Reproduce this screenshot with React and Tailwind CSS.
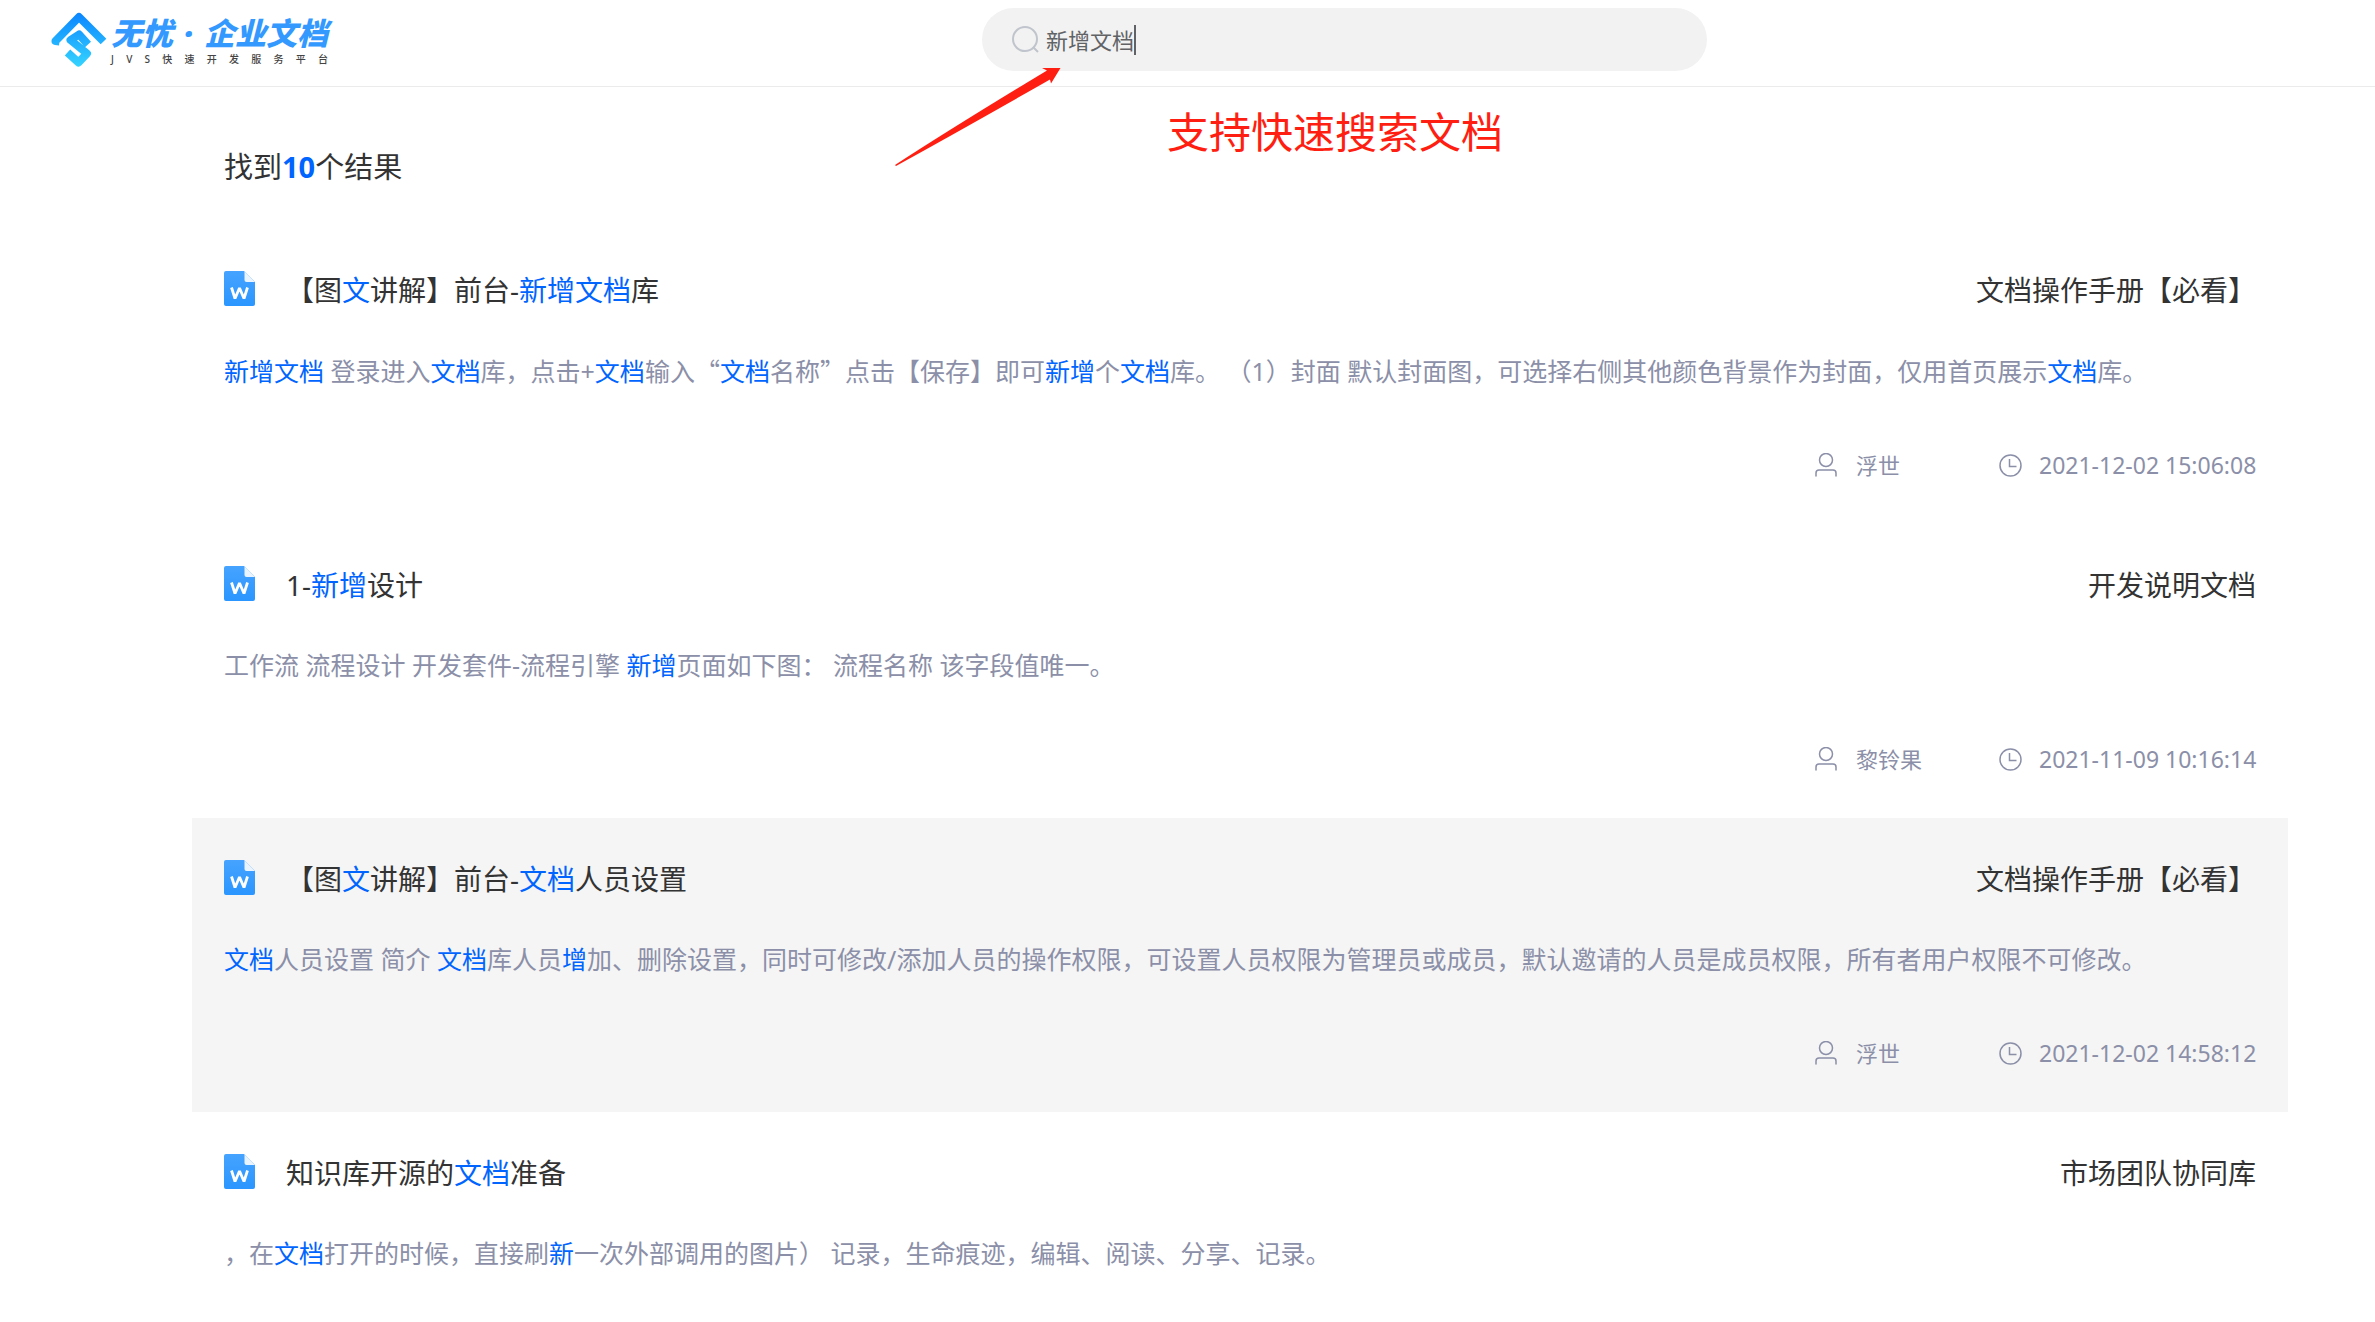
import React, { useState } from 'react';

const results = [
  {
    title: '【图<文>讲解】前台-<新增文档>库',
    library: '文档操作手册【必看】',
    summary:
      '<新增文档> 登录进入<文档>库，点击+<文档>输入“<文档>名称”点击【保存】即可<新增>个<文档>库。 （1）封面 默认封面图，可选择右侧其他颜色背景作为封面，仅用首页展示<文档>库。',
    author: '浮世',
    time: '2021-12-02 15:06:08',
  },
  {
    title: '1-<新增>设计',
    library: '开发说明文档',
    summary: '工作流 流程设计 开发套件-流程引擎 <新增>页面如下图： 流程名称 该字段值唯一。',
    author: '黎铃果',
    time: '2021-11-09 10:16:14',
  },
  {
    title: '【图<文>讲解】前台-<文档>人员设置',
    library: '文档操作手册【必看】',
    summary:
      '<文档>人员设置 简介 <文档>库人员<增>加、删除设置，同时可修改/添加人员的操作权限，可设置人员权限为管理员或成员，默认邀请的人员是成员权限，所有者用户权限不可修改。',
    author: '浮世',
    time: '2021-12-02 14:58:12',
    active: true,
  },
  {
    title: '知识库开源的<文档>准备',
    library: '市场团队协同库',
    summary: '，在<文档>打开的时候，直接刷<新>一次外部调用的图片） 记录，生命痕迹，编辑、阅读、分享、记录。',
  },
];

// Matched keywords are wrapped in <...>, curly quotes need the full-width CJK glyphs
const Highlight = ({ text }) =>
  text.split(/(<[^>]+>|[“”])/).map((part, i) => {
    if (part.startsWith('<')) return <em key={i} className="not-italic text-[#0064ff]">{part.slice(1, -1)}</em>;
    if (part === '“' || part === '”') return <span key={i} className="font-['Noto_Sans_CJK_SC',sans-serif]">{part}</span>;
    return <span key={i}>{part}</span>;
  });

const LogoMark = () => (
  <svg viewBox="0 0 56 56" className="w-14 h-14" fill="none" stroke="url(#mark)" strokeLinejoin="round" aria-hidden="true">
    <defs>
      <linearGradient id="mark" gradientUnits="userSpaceOnUse" x1="0" y1="0" x2="0" y2="56">
        <stop offset="0" stopColor="#0a84ff" />
        <stop offset="1" stopColor="#36d6ff" />
      </linearGradient>
    </defs>
    <path strokeWidth="8" d="M8.500 29.500L4.500 29 28 5 52.500 29.500" />
    <path strokeWidth="8" d="M37 32.500L28 22.500 19.500 28 36 41.500 27.500 50.500 16.500 40.500" />
  </svg>
);

const SearchIcon = () => (
  <svg viewBox="0 0 27 27" className="w-[27px] h-[27px] shrink-0" fill="none" stroke="#c0c4cc" strokeWidth="2" aria-hidden="true">
    <circle cx="13" cy="13" r="12" />
    <path d="M21 21l5 5" />
  </svg>
);

const WordIcon = () => (
  <svg viewBox="0 0 31 38" className="w-[31px] h-[38px] shrink-0" aria-hidden="true">
    <defs>
      <linearGradient id="word" x1="0" y1="0" x2="0" y2="1">
        <stop offset="0" stopColor="#46a3ff" />
        <stop offset="1" stopColor="#2a96ff" />
      </linearGradient>
    </defs>
    <path fill="url(#word)" d="M2 0h18l11 11v22q0 2-2 2H2q-2 0-2-2V2q0-2 2-2z" />
    <path fill="#e9f4ff" d="M20.500 0.500L31 11h-8.500q-2 0-2-2z" />
    <path fill="none" stroke="#fff" strokeWidth="2.800" strokeLinejoin="bevel" d="M7.500 16.500l3.500 11 4.500-10.500 4.500 10.500 3.500-11" />
  </svg>
);

const UserIcon = () => (
  <svg viewBox="0 0 22 24" className="w-[22px] h-6 shrink-0" fill="none" stroke="currentColor" strokeWidth="1.500" strokeLinecap="round" aria-hidden="true">
    <circle cx="11" cy="7" r="6.500" />
    <path d="M1 23v-3q0-3 3-3h14q3 0 3 3v3" />
  </svg>
);

const ClockIcon = () => (
  <svg viewBox="0 0 23 23" className="w-[23px] h-[23px] shrink-0" fill="none" stroke="currentColor" strokeWidth="1.500" aria-hidden="true">
    <circle cx="11.500" cy="11.500" r="10.500" />
    <path d="M10.500 5v7.500h7" />
  </svg>
);

const Header = () => {
  const [keyword, setKeyword] = useState('新增文档');

  return (
    <header className="relative flex items-start h-[87px] border-b border-[#ebebeb]">
      <a href="#" className="flex items-start gap-1 pl-[51px] pt-3">
        <LogoMark />
        <span className="flex flex-col w-[217px]">
          <span className="flex justify-between text-[31px] leading-[42px] font-black italic text-[#3399ff]">
            <span>无忧</span>
            <span>·</span>
            <span>企业文档</span>
          </span>
          <span className="flex justify-between text-[10px] leading-[10px] font-medium text-[#444]">
            {[...'JVS快速开发服务平台'].map((c) => <span key={c}>{c}</span>)}
          </span>
        </span>
      </a>

      <label className="absolute left-[982px] top-2 flex items-center w-[725px] h-[63px] pl-[30px] rounded-full bg-[#f2f2f2] cursor-text">
        <SearchIcon />
        <input
          aria-label="搜索文档"
          value={keyword}
          onChange={(e) => setKeyword(e.target.value)}
          className="ml-[7px] field-sizing-content bg-transparent outline-none caret-transparent text-[22px] leading-8 text-[#606266]"
        />
        <span className="w-0.5 h-[30px] bg-[#606266]" />
      </label>

      {/* callout for the search box */}
      <svg viewBox="0 0 166 98" className="absolute left-[895px] top-[68px] w-[166px] h-[98px]" aria-hidden="true">
        <path fill="#ff1f12" d="M0 97Q60 58 152 2.500L147 0h18.500L156 15.500 155 11.500Q70 60 1 98z" />
      </svg>
      <p className="absolute left-[1167px] top-[102px] text-[42px] leading-[60px] whitespace-nowrap text-[#ff1f12]">
        支持快速搜索文档
      </p>
    </header>
  );
};

const ResultItem = ({ item }) => (
  <li className={`px-8 pt-10 pb-[39px] ${item.active ? 'bg-[#f5f5f5]' : ''}`}>
    <div className="flex items-center justify-between text-[28px] leading-[42px] text-[#333]">
      <h2 className="flex items-center gap-[31px]">
        <WordIcon />
        <a href="#"><Highlight text={item.title} /></a>
      </h2>
      <span>{item.library}</span>
    </div>
    <p lang="zh-CN" className="mt-[39px] text-[25px] leading-10 text-[#8b8fa8]">
      <Highlight text={item.summary} />
    </p>
    {item.author && (
      <div className="flex justify-end mt-[54px] text-[22px] leading-10 text-[#8b8fa8]">
        <span className="flex items-center gap-[19px] w-[184px]">
          <UserIcon />
          {item.author}
        </span>
        <span className="flex items-center gap-[17px] w-[257px] whitespace-nowrap">
          <ClockIcon />
          <time className="text-[23px]">{item.time}</time>
        </span>
      </div>
    )}
  </li>
);

export default function App() {
  return (
    <div className="h-screen overflow-hidden bg-white font-['Noto_Sans','Noto_Sans_CJK_SC',sans-serif]">
      <Header />
      <main className="ml-48 mr-[87px] pt-[58px]">
        <h1 className="px-8 text-[29px] leading-[44px] text-[#333]">
          找到<b className="text-[#0064ff]">10</b>个结果
        </h1>
        <ul className="mt-10">
          {results.map((item, i) => <ResultItem key={i} item={item} />)}
        </ul>
      </main>
    </div>
  );
}
